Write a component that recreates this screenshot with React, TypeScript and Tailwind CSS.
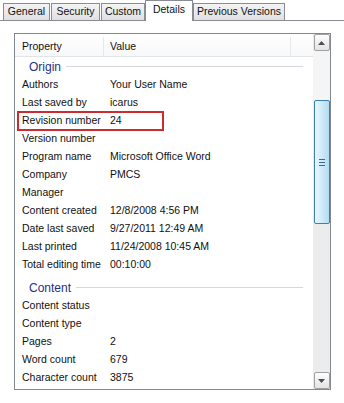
import React from 'react';

type Row = { name: string; value?: string; boxed?: boolean };

const ORIGIN: Row[] = [
  { name: 'Authors', value: 'Your User Name' },
  { name: 'Last saved by', value: 'icarus' },
  { name: 'Revision number', value: '24', boxed: true },
  { name: 'Version number' },
  { name: 'Program name', value: 'Microsoft Office Word' },
  { name: 'Company', value: 'PMCS' },
  { name: 'Manager' },
  { name: 'Content created', value: '12/8/2008 4:56 PM' },
  { name: 'Date last saved', value: '9/27/2011 12:49 AM' },
  { name: 'Last printed', value: '11/24/2008 10:45 AM' },
  { name: 'Total editing time', value: '00:10:00' },
];

const CONTENT: Row[] = [
  { name: 'Content status' },
  { name: 'Content type' },
  { name: 'Pages', value: '2' },
  { name: 'Word count', value: '679' },
  { name: 'Character count', value: '3875' },
];

const TABS = [
  { label: 'General', w: 'w-[47px]', ml: 'ml-[3px]' },
  { label: 'Security', w: 'w-[49px]', ml: 'ml-[1px]' },
  { label: 'Custom', w: 'w-[44px]', ml: 'ml-[1px]' },
  { label: 'Details', w: 'w-[48px]', ml: 'ml-0', active: true },
  { label: 'Previous Versions', w: 'w-[92px]', ml: 'ml-0' },
];

function PropRow({ row }: { row: Row }) {
  return (
    <div className="relative grid h-[18px] grid-cols-[88px_1fr] items-center">
      <span className="pl-[7px] whitespace-nowrap">{row.name}</span>
      <span className="pl-[7px] whitespace-nowrap">{row.value}</span>
      {row.boxed && (
        <div className="pointer-events-none absolute left-[2px] top-[-1px] h-[20px] w-[147px] border-2 border-[#cc2b2f]" />
      )}
    </div>
  );
}

function GroupHeader({ label }: { label: string }) {
  return (
    <div className="flex h-[19px] items-center pr-[10px] pl-[14px]">
      <span className="text-[#1e3287] text-[12px]">{label}</span>
      <div className="ml-[5px] h-px flex-1 bg-[#d5d8de]" />
    </div>
  );
}

function Arrow({ up }: { up?: boolean }) {
  return (
    <div className="flex h-[17px] w-[16px] items-center justify-center rounded-[2px] border border-[#a0a0a0] bg-gradient-to-b from-[#fdfdfd] to-[#e4e4e4]">
      <svg width="7" height="4" viewBox="0 0 7 4">
        <path d={up ? 'M0 4 L3.5 0 L7 4 Z' : 'M0 0 L3.5 4 L7 0 Z'} fill="#4d4d4d" />
      </svg>
    </div>
  );
}

function ScrollBar() {
  return (
    <div className="flex w-[17px] flex-col items-center bg-[#ececec]">
      <Arrow up />
      <div className="h-[49px] w-full bg-[#f5f5f5]" />
      <div className="flex h-[124px] w-[16px] items-center justify-center rounded-[2px] border border-[#3c7fb1] bg-gradient-to-r from-[#e9f6fd] via-[#cfeafa] to-[#b1dcf4]">
        <div className="flex flex-col gap-[2px]">
          <div className="h-px w-[6px] bg-[#3d6a8c]" />
          <div className="h-px w-[6px] bg-[#3d6a8c]" />
          <div className="h-px w-[6px] bg-[#3d6a8c]" />
        </div>
      </div>
      <div className="flex-1" />
      <Arrow />
    </div>
  );
}

export default function App() {
  return (
    <div
      className="h-[403px] w-[344px] overflow-hidden bg-white text-[10.5px] text-[#111]"
      style={{ fontFamily: '"Liberation Sans", Arial, sans-serif' }}
    >
      {/* tab strip */}
      <div className="flex h-[21px] items-end border-b border-[#898c95]">
        {TABS.map((t) =>
          t.active ? (
            <div
              key={t.label}
              className={`${t.w} ${t.ml} relative z-10 -mb-px flex h-[21px] items-center justify-center border border-b-0 border-[#898c95] bg-white pb-[2px]`}
            >
              {t.label}
            </div>
          ) : (
            <div
              key={t.label}
              className={`${t.w} ${t.ml} flex h-[17px] items-center justify-center border border-b-0 border-[#898c95] bg-gradient-to-b from-[#f4f4f4] to-[#e0e0e0]`}
            >
              {t.label}
            </div>
          )
        )}
      </div>

      {/* panel */}
      <div className="pt-[12px] pl-[14px]">
        <div className="flex h-[357px] w-[317px] border border-[#828790] bg-white">
          <div className="flex-1">
            <div className="flex h-[23px] items-center border-b border-[#e2e4e8] bg-gradient-to-b from-white to-[#f7f8f9] pt-[3px]">
              <div className="w-[88px] pl-[7px]">Property</div>
              <div className="h-full w-px bg-[#e6e8ec]" />
              <div className="w-[186px] pl-[6px]">Value</div>
              <div className="h-full w-px bg-[#e6e8ec]" />
            </div>
            <GroupHeader label="Origin" />
            {ORIGIN.map((r) => (
              <PropRow key={r.name} row={r} />
            ))}
            <div className="h-[4px]" />
            <GroupHeader label="Content" />
            {CONTENT.map((r) => (
              <PropRow key={r.name} row={r} />
            ))}
          </div>
          <ScrollBar />
        </div>
      </div>
    </div>
  );
}
